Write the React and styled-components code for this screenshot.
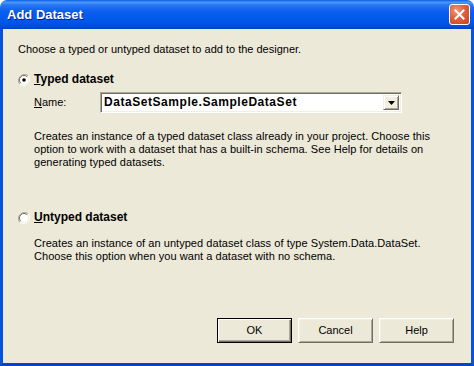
import React from 'react';
import styled, { createGlobalStyle } from 'styled-components';

const GlobalStyle = createGlobalStyle`
  html, body {
    margin: 0;
    padding: 0;
    background: #ffffff;
  }
  body {
    font-family: "Liberation Sans", Arial, sans-serif;
    font-size: 11px;
    color: #000000;
  }
`;

const Window = styled.div`
  width: 474px;
  height: 366px;
  display: flex;
  flex-direction: column;
  box-sizing: border-box;
`;

const TitleBar = styled.div`
  height: 29px;
  flex: none;
  display: flex;
  align-items: center;
  justify-content: space-between;
  padding: 0 4px 0 7px;
  border-radius: 7px 7px 0 0;
  background: linear-gradient(
    to bottom,
    #0a5fe8 0%,
    #4a98f8 8%,
    #2775f2 18%,
    #0a5ef0 40%,
    #0058ec 70%,
    #004ede 90%,
    #0040c8 100%
  );
  box-sizing: border-box;
`;

const Title = styled.span`
  color: #ffffff;
  font-weight: bold;
  font-size: 13px;
  text-shadow: 1px 1px 0 #0a1e8a;
`;

const CloseButton = styled.div`
  width: 21px;
  height: 21px;
  box-sizing: border-box;
  border: 1px solid #ffffff;
  border-radius: 3px;
  background: radial-gradient(circle at 35% 30%, #ef9a7c 0%, #e0603c 45%, #c8421f 100%);
  display: flex;
  align-items: center;
  justify-content: center;
`;

const Body = styled.div`
  flex: 1;
  display: flex;
  flex-direction: column;
  background: #ece9d8;
  border-left: 3px solid #0852e0;
  border-right: 3px solid #0852e0;
  border-bottom: 3px solid #0842c8;
  padding: 14px 17px 20px 15px;
  line-height: 13px;
`;

const Intro = styled.div`
  white-space: nowrap;
`;

const Option = styled.div`
  margin-top: ${(props) => props.gap}px;
  display: flex;
  flex-direction: column;
`;

const RadioRow = styled.div`
  display: flex;
  align-items: center;
  gap: 4px;
  height: 13px;
`;

const RadioCircle = styled.div`
  width: 12px;
  height: 12px;
  flex: none;
`;

const RadioLabel = styled.span`
  font-weight: bold;
  font-size: 12px;
`;

const Key = styled.span`
  text-decoration: underline;
`;

const NameRow = styled.div`
  display: flex;
  align-items: center;
  margin: 6px 0 0 16px;
`;

const NameLabel = styled.span`
  width: 66px;
  flex: none;
`;

const Combo = styled.div`
  width: 302px;
  height: 21px;
  box-sizing: border-box;
  display: flex;
  align-items: center;
  background: #ffffff;
  border-top: 1px solid #aca899;
  border-left: 1px solid #aca899;
  border-right: 1px solid #ffffff;
  border-bottom: 1px solid #ffffff;
  box-shadow: inset 1px 1px 0 #716f64, inset -1px -1px 0 #f1efe2;
  padding: 2px;
`;

const ComboText = styled.span`
  flex: 1;
  font-weight: bold;
  font-size: 12px;
  letter-spacing: 0.55px;
  padding-left: 1px;
`;

const ComboButton = styled.div`
  width: 16px;
  height: 15px;
  flex: none;
  box-sizing: border-box;
  background: #f1efe2;
  border-top: 1px solid #f1efe2;
  border-left: 1px solid #f1efe2;
  border-right: 1px solid #716f64;
  border-bottom: 1px solid #716f64;
  box-shadow: inset 1px 1px 0 #ffffff, inset -1px -1px 0 #aca899;
  display: flex;
  align-items: center;
  justify-content: center;
`;

const Description = styled.div`
  margin: ${(props) => props.top}px 0 0 16px;
  white-space: nowrap;
  letter-spacing: 0.05px;
`;

const Footer = styled.div`
  margin-top: auto;
  display: flex;
  justify-content: flex-end;
  gap: 6px;
`;

const Button = styled.div`
  width: 75px;
  height: 25px;
  box-sizing: border-box;
  display: flex;
  align-items: center;
  justify-content: center;
  background: #ece9d8;
  border: 1px solid;
  border-color: ${(props) =>
    props.primary ? '#000000' : '#ffffff #716f64 #716f64 #ffffff'};
  box-shadow: ${(props) =>
    props.primary
      ? 'inset 1px 1px 0 #ffffff, inset -1px -1px 0 #716f64, inset -2px -2px 0 #aca899'
      : 'inset 1px 1px 0 #f1efe2, inset -1px -1px 0 #aca899'};
`;

function Radio({ checked }) {
  return (
    <RadioCircle>
      <svg width="12" height="12" viewBox="0 0 12 12">
        <path d="M10.2 1.8A6 6 0 0 0 1.8 10.2" stroke="#aca899" strokeWidth="1" fill="none" />
        <path d="M1.8 10.2A6 6 0 0 0 10.2 1.8" stroke="#ffffff" strokeWidth="1" fill="none" />
        <circle cx="6" cy="6" r="4.5" fill="#ffffff" />
        <path d="M9.2 2.8A4.5 4.5 0 0 0 2.8 9.2" stroke="#716f64" strokeWidth="1" fill="none" />
        <path d="M2.8 9.2A4.5 4.5 0 0 0 9.2 2.8" stroke="#f1efe2" strokeWidth="1" fill="none" />
        {checked && <circle cx="6" cy="6" r="1.8" fill="#000000" />}
      </svg>
    </RadioCircle>
  );
}

export default function App() {
  return (
    <>
      <GlobalStyle />
      <Window>
        <TitleBar>
          <Title>Add Dataset</Title>
          <CloseButton>
            <svg width="11" height="11" viewBox="0 0 11 11">
              <path d="M1.5 1.5L9.5 9.5M9.5 1.5L1.5 9.5" stroke="#ffffff" strokeWidth="2" strokeLinecap="square" />
            </svg>
          </CloseButton>
        </TitleBar>
        <Body>
          <Intro>Choose a typed or untyped dataset to add to the designer.</Intro>

          <Option gap={17}>
            <RadioRow>
              <Radio checked />
              <RadioLabel><Key>T</Key>yped dataset</RadioLabel>
            </RadioRow>
            <NameRow>
              <NameLabel><Key>N</Key>ame:</NameLabel>
              <Combo>
                <ComboText>DataSetSample.SampleDataSet</ComboText>
                <ComboButton>
                  <svg width="7" height="4" viewBox="0 0 7 4">
                    <path d="M0 0H7L3.5 4Z" fill="#000000" />
                  </svg>
                </ComboButton>
              </Combo>
            </NameRow>
            <Description top={17}>
              Creates an instance of a typed dataset class already in your project. Choose this<br />
              option to work with a dataset that has a built-in schema. See Help for details on<br />
              generating typed datasets.
            </Description>
          </Option>

          <Option gap={42}>
            <RadioRow>
              <Radio />
              <RadioLabel><Key>U</Key>ntyped dataset</RadioLabel>
            </RadioRow>
            <Description top={13}>
              Creates an instance of an untyped dataset class of type System.Data.DataSet.<br />
              Choose this option when you want a dataset with no schema.
            </Description>
          </Option>

          <Footer>
            <Button primary>OK</Button>
            <Button>Cancel</Button>
            <Button>Help</Button>
          </Footer>
        </Body>
      </Window>
    </>
  );
}
